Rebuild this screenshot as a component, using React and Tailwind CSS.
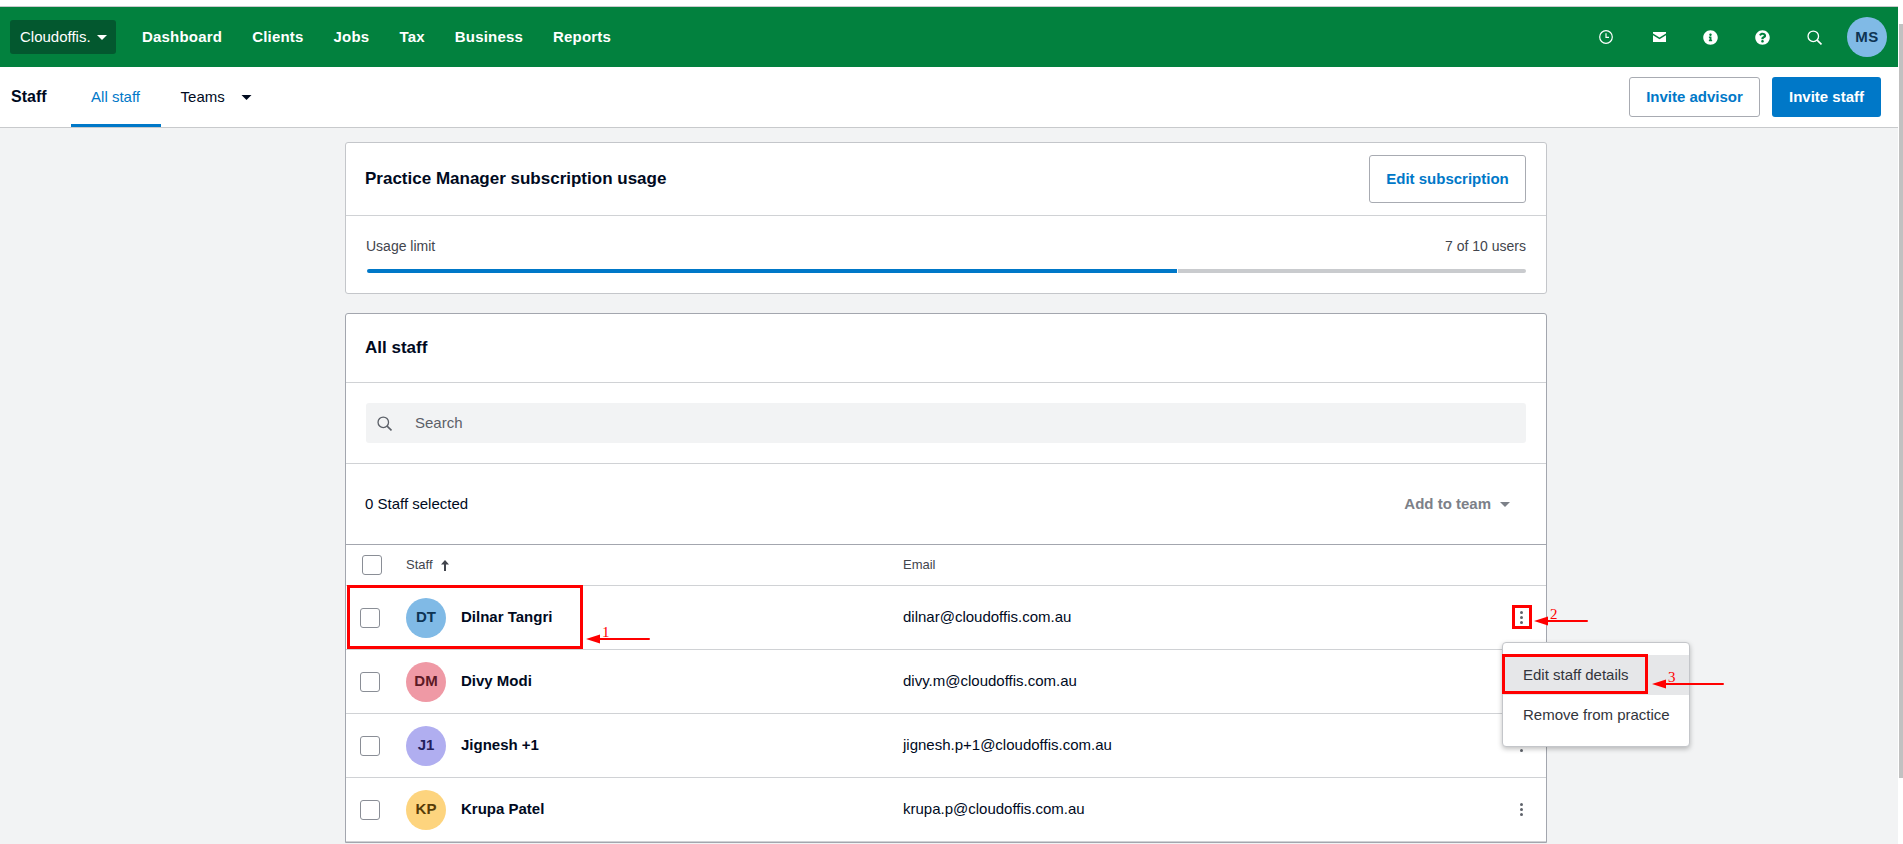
import React from "react";
import { FaInfoCircle, FaQuestionCircle } from "react-icons/fa";

const navItems = ["Dashboard", "Clients", "Jobs", "Tax", "Business", "Reports"];

const staff = [
  { initials: "DT", name: "Dilnar Tangri", email: "dilnar@cloudoffis.com.au", color: "bg-[#80bae6] text-[#0d3454]" },
  { initials: "DM", name: "Divy Modi", email: "divy.m@cloudoffis.com.au", color: "bg-[#ef99a5] text-[#5c1a26]" },
  { initials: "J1", name: "Jignesh +1", email: "jignesh.p+1@cloudoffis.com.au", color: "bg-[#b0aef0] text-[#22205e]" },
  { initials: "KP", name: "Krupa Patel", email: "krupa.p@cloudoffis.com.au", color: "bg-[#fdd47e] text-[#573c06]" },
];

const Caret = ({ className }) => (
  <svg viewBox="0 0 10 5" className={className} fill="currentColor">
    <path d="M0 0h10L5 5z" />
  </svg>
);

const SearchIcon = ({ className }) => (
  <svg viewBox="0 0 16 16" className={className} fill="none" stroke="currentColor" strokeWidth="1.4">
    <circle cx="6.7" cy="6.7" r="5.6" />
    <path d="M10.8 10.8l4.6 4.6" strokeWidth="1.7" />
  </svg>
);

const Checkbox = () => (
  <span className="block h-5 w-5 rounded-[3px] border border-[#8a8e96] bg-white" />
);

const Kebab = () => (
  <span className="flex w-[3px] flex-col gap-[2px]">
    <span className="h-[3px] w-[3px] rounded-full bg-[#5f636b]" />
    <span className="h-[3px] w-[3px] rounded-full bg-[#5f636b]" />
    <span className="h-[3px] w-[3px] rounded-full bg-[#5f636b]" />
  </span>
);

const Arrow = ({ className, width }) => (
  <svg viewBox={`0 0 ${width} 10`} className={`absolute h-[10px] text-[#ff0000] ${className}`} fill="currentColor">
    <path d={`M0 5L14 0.5V4H${width - 1}a1 1 0 0 1 0 2H14V9.5z`} />
  </svg>
);

const Note = ({ className, children }) => (
  <span className={`absolute font-['Liberation_Serif',serif] text-[15px] leading-[15px] text-[#ff0000] ${className}`}>
    {children}
  </span>
);

const App = () => {
  return (
    <div className="relative flex h-[844px] w-[1903px] overflow-hidden bg-[#f2f3f4] font-['Liberation_Sans',Arial,sans-serif] text-[15px] text-[#000a1e]">
      <div className="w-[1898px] shrink-0">
        {/* Top strip */}
        <div className="h-[7px] border-b border-[#c8cacc] bg-white" />

        {/* Main nav */}
        <header className="flex h-[60px] items-center bg-[#02813e] pr-[11px] pl-[10px] text-white">
          <button className="flex h-[34px] w-[106px] items-center rounded-[3px] bg-[#03582f] pl-[10px]">
            Cloudoffis.
            <Caret className="ml-[6px] h-[5px] w-[10px]" />
          </button>
          <nav className="ml-[26px] flex gap-[30px] font-bold tracking-[0.2px]">
            {navItems.map((item) => (
              <a key={item}>{item}</a>
            ))}
          </nav>
          <div className="ml-auto flex items-center">
            <svg viewBox="0 0 14 14" className="h-[14px] w-[14px]" fill="none" stroke="currentColor" strokeWidth="1.2">
              <circle cx="7" cy="7" r="6.3" />
              <path d="M7 3.2V7.4H10" />
            </svg>
            <svg viewBox="0 0 13 10" className="ml-[40px] h-[10px] w-[13px]" fill="currentColor">
              <path d="M0 0h13v1.6L6.5 5.6 0 1.6z" />
              <path d="M0 3.2l6.5 4 6.5-4V10H0z" />
            </svg>
            <FaInfoCircle className="ml-[37px] h-[15px] w-[15px]" />
            <FaQuestionCircle className="ml-[37px] h-[15px] w-[15px]" />
            <SearchIcon className="ml-[37px] h-[15px] w-[15px]" />
            <span className="ml-[25px] flex h-10 w-10 items-center justify-center rounded-full bg-[#80bae6] font-bold tracking-[0.4px] text-[#0d3454]">
              MS
            </span>
          </div>
        </header>

        {/* Sub nav */}
        <div className="flex h-[61px] items-center border-b border-[#c8cacc] bg-white pr-[17px] pl-[11px]">
          <span className="text-[16px] font-bold">Staff</span>
          <div className="relative ml-[24px] flex h-full w-[90px] items-center justify-center text-[#0078c8]">
            All staff
            <span className="absolute right-0 bottom-0 left-0 h-[3px] bg-[#0078c8]" />
          </div>
          <span className="ml-[20px]">Teams</span>
          <Caret className="ml-[16px] h-[5px] w-[11px]" />
          <button className="ml-auto h-10 w-[131px] rounded-[3px] border border-[#a8abb2] bg-white font-bold text-[#0078c8]">
            Invite advisor
          </button>
          <button className="ml-[12px] h-10 w-[109px] rounded-[3px] bg-[#0078c8] font-bold text-white">
            Invite staff
          </button>
        </div>

        <main className="mt-[14px] ml-[345px] w-[1202px]">
          {/* Subscription usage */}
          <section className="h-[152px] rounded-[3px] border border-[#c4c6ca] bg-white">
            <div className="flex h-[73px] items-center justify-between border-b border-[#d0d2d5] pr-[20px] pl-[19px]">
              <h2 className="text-[17px] font-bold">Practice Manager subscription usage</h2>
              <button className="h-[48px] w-[157px] rounded-[3px] border border-[#a8abb2] font-bold text-[#0078c8]">
                Edit subscription
              </button>
            </div>
            <div className="px-[20px] pt-[22px]">
              <div className="flex justify-between text-[14px] leading-[16px] text-[#42454d]">
                <span>Usage limit</span>
                <span>7 of 10 users</span>
              </div>
              <div className="mt-[15px] flex h-[4px] gap-[1px] pl-[1px]">
                <div className="w-[810px] rounded-l-[2px] bg-[#0078c8]" />
                <div className="flex-1 rounded-r-[2px] bg-[#c9cbce]" />
              </div>
            </div>
          </section>

          {/* All staff */}
          <section className="mt-[19px] rounded-t-[3px] border border-[#a3a6ae] bg-white">
            <div className="flex h-[69px] items-center border-b border-[#d0d2d5] pl-[19px]">
              <h2 className="text-[17px] font-bold">All staff</h2>
            </div>
            <div className="border-b border-[#d0d2d5] p-[20px]">
              <div className="flex h-10 items-center rounded-[3px] bg-[#f2f3f4] pl-[11px] text-[#5c6068]">
                <SearchIcon className="h-[15px] w-[15px]" />
                <span className="ml-[23px]">Search</span>
              </div>
            </div>
            <div className="flex h-[81px] items-center justify-between border-b border-[#a3a6ae] pr-[36px] pl-[19px]">
              <span>0 Staff selected</span>
              <span className="flex items-center font-bold text-[#7c8088]">
                Add to team
                <Caret className="ml-[9px] h-[5px] w-[10px]" />
              </span>
            </div>

            {/* Table head */}
            <div className="grid h-[41px] grid-cols-[557px_1fr] items-center border-b border-[#d0d2d5] text-[13px] text-[#42454d]">
              <div className="flex items-center pl-[16px]">
                <Checkbox />
                <span className="ml-[24px]">Staff</span>
                <svg viewBox="0 0 8 11" className="ml-[8px] h-[11px] w-[8px]" fill="currentColor">
                  <path d="M4 0l4 4.5H5V11H3V4.5H0z" />
                </svg>
              </div>
              <span>Email</span>
            </div>

            {/* Rows */}
            {staff.map((person) => (
              <div key={person.email} className="grid h-[64px] grid-cols-[557px_1fr_auto] items-center border-b border-[#d0d2d5] pr-[23px]">
                <div className="flex items-center pl-[14px]">
                  <Checkbox />
                  <span className={`ml-[26px] flex h-10 w-10 items-center justify-center rounded-full font-bold ${person.color}`}>
                    {person.initials}
                  </span>
                  <span className="ml-[15px] font-bold">{person.name}</span>
                </div>
                <span>{person.email}</span>
                <Kebab />
              </div>
            ))}
          </section>
        </main>
      </div>

      {/* Scrollbar */}
      <div className="flex w-[5px] flex-col bg-white pt-[24px] pl-[1px]">
        <div className="h-[754px] bg-[#c1c1c1]" />
      </div>

      {/* Row action menu */}
      <div className="absolute top-[642px] left-[1502px] w-[188px] rounded-[4px] border border-[#c4c6ca] bg-white pt-[12px] pb-[11px] text-[#32353c] shadow-[0_2px_5px_rgba(0,0,0,0.25)]">
        <div className="flex h-10 items-center bg-[#e6e7e9] pl-[20px]">Edit staff details</div>
        <div className="flex h-10 items-center pl-[20px]">Remove from practice</div>
      </div>

      {/* Red annotations */}
      <div className="absolute top-[585px] left-[347px] h-[64px] w-[236px] border-[3px] border-[#ff0000]" />
      <Arrow className="top-[634px] left-[586px] w-[64px]" width={64} />
      <Note className="top-[625px] left-[602px]">1</Note>

      <div className="absolute top-[605px] left-[1512px] h-[24px] w-[20px] border-[3px] border-[#ff0000]" />
      <Arrow className="top-[616px] left-[1534px] w-[54px]" width={54} />
      <Note className="top-[607px] left-[1550px]">2</Note>

      <div className="absolute top-[654px] left-[1502px] h-[40px] w-[146px] border-[3px] border-[#ff0000]" />
      <Arrow className="top-[679px] left-[1652px] w-[72px]" width={72} />
      <Note className="top-[670px] left-[1668px]">3</Note>
    </div>
  );
};

export default App;
